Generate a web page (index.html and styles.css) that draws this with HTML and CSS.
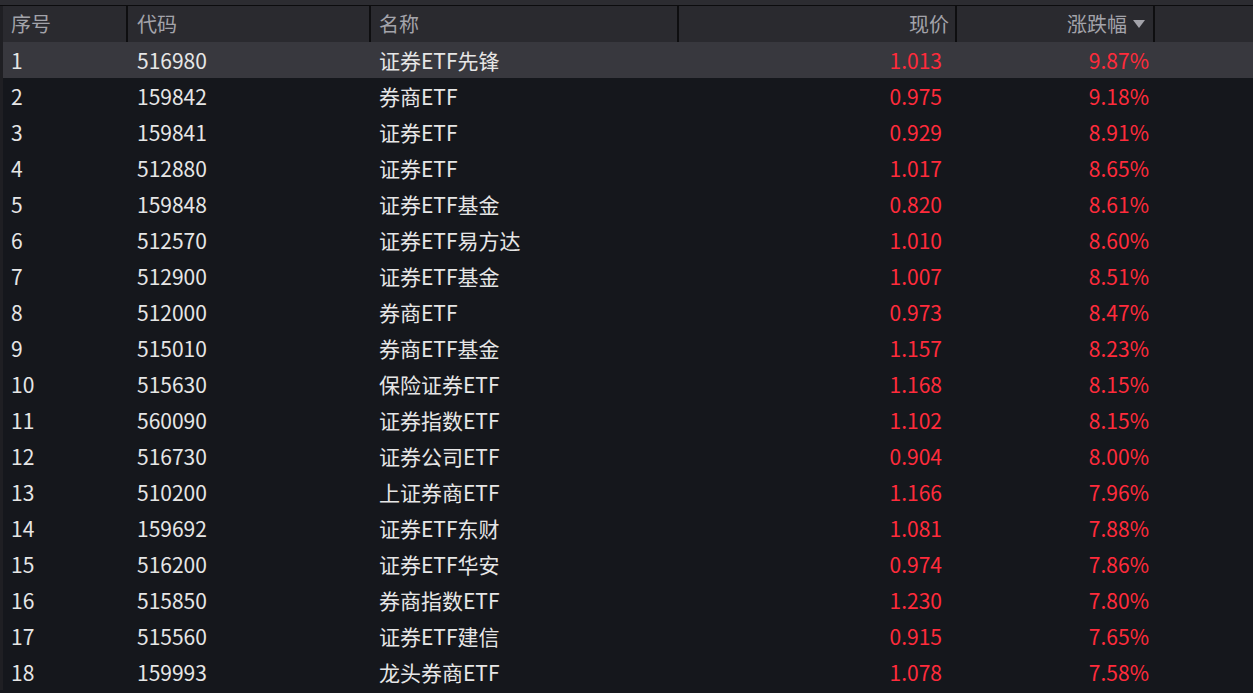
FILE: index.html
```html
<!DOCTYPE html>
<html lang="zh-CN">
<head>
    <meta charset="utf-8" />
    <meta name="viewport" content="width=device-width, initial-scale=1.0">
    <link rel="stylesheet" href="styles.css">
    <title>ETF涨幅榜</title>
</head>
<body>
    <div class="topbar"></div>
    <div class="board">
        <div class="row head">
            <div class="c c1">序号</div>
            <div class="c c2">代码</div>
            <div class="c c3">名称</div>
            <div class="c c4 r">现价</div>
            <div class="c c5 r">涨跌幅<span class="arrow"></span></div>
            <div class="c c6"></div>
        </div>
        <div id="rows"></div>
    </div>
    <script>
const data = [
    ['516980', '证券ETF先锋', '1.013', '9.87%'],
    ['159842', '券商ETF', '0.975', '9.18%'],
    ['159841', '证券ETF', '0.929', '8.91%'],
    ['512880', '证券ETF', '1.017', '8.65%'],
    ['159848', '证券ETF基金', '0.820', '8.61%'],
    ['512570', '证券ETF易方达', '1.010', '8.60%'],
    ['512900', '证券ETF基金', '1.007', '8.51%'],
    ['512000', '券商ETF', '0.973', '8.47%'],
    ['515010', '券商ETF基金', '1.157', '8.23%'],
    ['515630', '保险证券ETF', '1.168', '8.15%'],
    ['560090', '证券指数ETF', '1.102', '8.15%'],
    ['516730', '证券公司ETF', '0.904', '8.00%'],
    ['510200', '上证券商ETF', '1.166', '7.96%'],
    ['159692', '证券ETF东财', '1.081', '7.88%'],
    ['516200', '证券ETF华安', '0.974', '7.86%'],
    ['515850', '券商指数ETF', '1.230', '7.80%'],
    ['515560', '证券ETF建信', '0.915', '7.65%'],
    ['159993', '龙头券商ETF', '1.078', '7.58%']
];

const rows = document.getElementById('rows');
data.forEach((d, i) => {
    const row = document.createElement('div');
    row.className = 'row' + (i === 0 ? ' selected' : '');
    row.innerHTML =
        '<div class="c c1">' + (i + 1) + '</div>' +
        '<div class="c c2">' + d[0] + '</div>' +
        '<div class="c c3">' + d[1] + '</div>' +
        '<div class="c c4 r up">' + d[2] + '</div>' +
        '<div class="c c5 r up">' + d[3] + '</div>' +
        '<div class="c c6"></div>';
    rows.appendChild(row);
});
    </script>
</body>
</html>
```

FILE: styles.css
```css
body {
    margin: 0;
    background-color: #15171c;
    font-family: "Noto Sans CJK SC", "Microsoft YaHei", sans-serif;
    font-size: 21px;
    color: #e6e6e6;
    overflow: hidden;
}

.topbar {
    height: 5px;
    background-color: #2c2c31;
    border-bottom: 1px solid #0c0c0e;
}

.board {
    border-left: 3px solid #1f1f23;
}

.row {
    display: flex;
    height: 36px;
    align-items: center;
}

.head {
    background-color: #2a2a2f;
    color: #a3a3aa;
    font-size: 20px;
    height: 36px;
    align-items: stretch;
}

.head .c {
    display: flex;
    align-items: center;
    border-right: 2px solid #0e0e10;
}

.head .c.r {
    justify-content: flex-end;
}

.head .c6 {
    border-right: none;
}

.selected {
    background-color: #38383e;
}

.c {
    box-sizing: border-box;
    white-space: nowrap;
    line-height: 35px;
    padding-top: 1px;
}

.c1 { width: 125px; padding-left: 8px; }
.c2 { width: 243px; padding-left: 9px; }
.c3 { width: 308px; padding-left: 8px; }
.c4 { width: 278px; padding-right: 15px; }
.c5 { width: 198px; padding-right: 6px; }
.c6 { flex: 1; }

.head .c { padding-top: 0; line-height: 36px; }
.head .c4 { padding-right: 6px; }
.head .c5 { padding-right: 8px; }

.r {
    text-align: right;
}

.up {
    color: #ff2b3b;
}

.arrow {
    display: inline-block;
    width: 0;
    height: 0;
    margin-left: 6px;
    border-left: 6px solid transparent;
    border-right: 6px solid transparent;
    border-top: 8px solid #a3a3aa;
}
```
